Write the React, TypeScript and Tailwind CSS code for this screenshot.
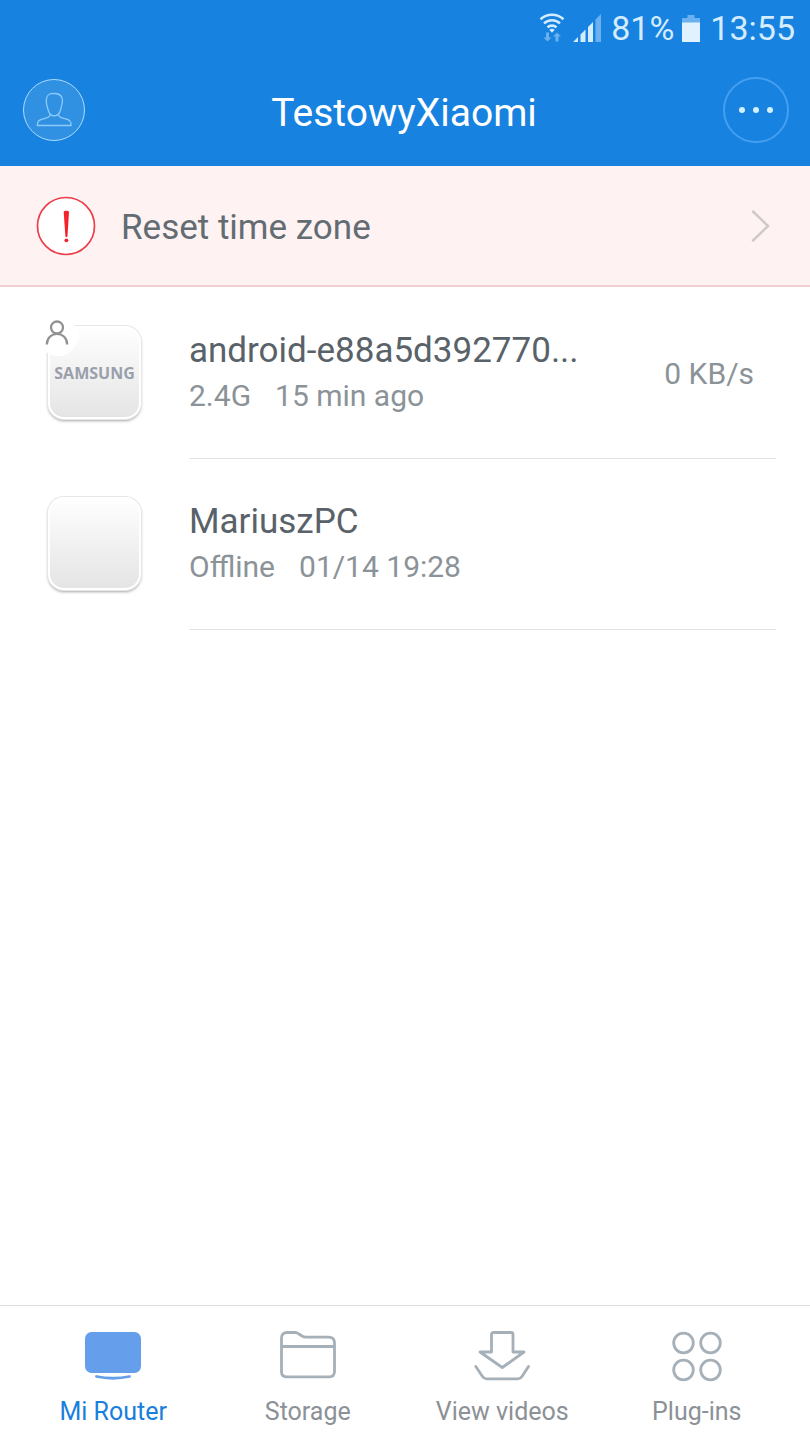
import React, { useState } from 'react';

type TabId = 'router' | 'storage' | 'videos' | 'plugins';

interface Device {
    id: string;
    name: string;
    status: string;
    lastSeen: string;
    speed?: string;
    brand?: string;
    isOwner?: boolean;
}

const devices: Device[] = [
    { id: 'android', name: 'android-e88a5d392770...', status: '2.4G', lastSeen: '15 min ago', speed: '0 KB/s', brand: 'SAMSUNG', isOwner: true },
    { id: 'pc', name: 'MariuszPC', status: 'Offline', lastSeen: '01/14 19:28' },
];

const WifiIcon = () => (
    <svg width="26" height="30" viewBox="0 0 26 30" fill="none">
        <g stroke="#d3ecff" strokeWidth="2.6">
            <path d="M1.5 6.2C8 .2 18 .2 24.5 6.2" />
            <path d="M5 10.4C9.5 6.2 16.5 6.2 21 10.4" />
            <path d="M8.5 14.4C11 12 15 12 17.5 14.4" />
        </g>
        <path d="M10.3 16.8Q13 14.8 15.7 16.8L13 19.8Z" fill="#d3ecff" />
        <path d="M7 19.5h3v5h2.5l-4 4-4-4H7zM16.5 28.5h3v-5H22l-4-4-4 4h2.500z" fill="#6bb1f0" />
    </svg>
);

const SignalIcon = () => (
    <svg width="28" height="28" viewBox="0 0 28 28">
        <path d="M0 28L5 23V28ZM7.5 20.5L12.5 15.5V28H7.5ZM15 13L20 8V28H15Z" fill="#d3ecff" />
        <path d="M22.5 5.5L28 0V28H22.5Z" fill="#6bb1f0" />
    </svg>
);

const BatteryIcon = () => (
    <svg width="18" height="27" viewBox="0 0 18 27">
        <path d="M5.5 0h7v3H18v5H0V3h5.5z" fill="#6bb1f0" />
        <path d="M0 7.5h18V27H0z" fill="#e0f1ff" />
    </svg>
);

const ProfileIcon = () => (
    <svg width="36" height="36" viewBox="0 0 36 36" fill="none" stroke="#8ccbfa" strokeWidth="1.3" strokeLinejoin="round">
        <path d="M18.5 1.5C22.5 1.5 26.5 3.5 26.5 9C26 12 25.5 15 24.5 18C23.5 22 21 23.8 18 23.8C15 23.8 13.5 22 12.5 19C11.5 16 10.5 12.5 10.2 9.5C10.2 4 13 1.800 15 1.6Z" />
        <path d="M14 22.5C14 26 11 25.5 7 26.8C3 28 1.5 28.5 1.3 33.5H35.2C35 28.5 33.5 28.2 29.5 26.8C25 25.5 22.8 25.5 22.5 22.3" />
    </svg>
);

const AlertIcon = () => (
    <svg width="60" height="60" viewBox="0 0 60 60">
        <circle cx="30" cy="30" r="28.5" fill="#fff" stroke="#ee3d48" strokeWidth="1.7" />
        <path d="M27.7 16C27.7 14.4 33 14.4 33 16L31.5 40.5Q30.4 41.5 29.4 40.5Z" fill="#f5222d" />
        <circle cx="30.4" cy="44.300" r="1.9" fill="#f5222d" />
    </svg>
);

const ChevronIcon = () => (
    <svg width="20" height="34" viewBox="0 0 20 34" fill="none" stroke="#cfc9c9" strokeWidth="2.5" strokeLinecap="round">
        <path d="M3 2.500L18 17L3 31.5" />
    </svg>
);

const OwnerIcon = () => (
    <svg width="24" height="26" viewBox="0 0 24 26" fill="none" stroke="#929292" strokeWidth="2.3">
        <circle cx="12" cy="7.5" r="6" />
        <path d="M1.8 24.5C2.2 10.3 21.8 10.3 22.2 24.5" />
    </svg>
);

const RouterIcon = () => (
    <svg width="56" height="52" viewBox="0 0 56 52">
        <rect x="0" y="2" width="56" height="41" rx="6.5" fill="#659fec" />
        <path d="M11.500 46.5Q28 50 44.5 46.5" fill="none" stroke="#659fec" strokeWidth="2.8" strokeLinecap="round" />
    </svg>
);

const FolderIcon = () => (
    <svg width="56" height="52" viewBox="0 0 56 52" fill="none" stroke="#a5b0b9" strokeWidth="2.8">
        <path d="M1.5 42V8Q1.5 2.5 7 2.5H15Q17 2.5 19 4L22 6Q24 7.2 26 7.2H48.5Q54.5 7.2 54.5 13V41.5Q54.5 46.8 49 46.8H7Q1.5 46.8 1.5 42ZM1.5 16.5H54.5" />
    </svg>
);

const DownloadIcon = () => (
    <svg width="56" height="52" viewBox="0 0 56 52" fill="none" stroke="#a5b0b9" strokeWidth="2.8" strokeLinecap="round" strokeLinejoin="round">
        <path d="M17.5 22V4.5Q17.5 2.5 19.5 2.5H37Q39 2.5 39 4.5V22H50L28.3 37.5L6 22Z" />
        <path d="M1.8 36.5L8.5 46.5Q10 48.8 12.5 48.8H44Q46.5 48.8 48 46.5L54.5 36.5" />
    </svg>
);

const PluginsIcon = () => (
    <svg width="56" height="52" viewBox="0 0 56 52" fill="none" stroke="#a5b0b9" strokeWidth="2.8">
        <circle cx="14.5" cy="13" r="9.8" />
        <circle cx="41.5" cy="13" r="9.8" />
        <circle cx="14.5" cy="40" r="9.8" />
        <circle cx="41.5" cy="40" r="9.8" />
    </svg>
);

const tabs: { id: TabId; label: string; Icon: React.FC }[] = [
    { id: 'router', label: 'Mi Router', Icon: RouterIcon },
    { id: 'storage', label: 'Storage', Icon: FolderIcon },
    { id: 'videos', label: 'View videos', Icon: DownloadIcon },
    { id: 'plugins', label: 'Plug-ins', Icon: PluginsIcon },
];

const DeviceRow: React.FC<{ device: Device }> = ({ device }) => (
    <li className="flex pl-12 pr-[34px]">
        <div className="flex w-[141px] shrink-0 items-center pb-0.5">
            <div className="relative flex h-[93px] w-[93px] items-center justify-center rounded-2xl border-2 border-white bg-gradient-to-b from-white to-[#e4e4e4] bg-origin-border shadow-[0_0_0_1px_#e6e6e6,0_2px_3px_rgba(0,0,0,0.35)]">
                {device.brand && <span className="font-['Open_Sans',sans-serif] text-base font-bold text-[#9a9fab]">{device.brand}</span>}
                {device.isOwner && (
                    <span className="absolute -left-3 -top-3 flex h-10 w-10 items-center justify-center rounded-full bg-white pb-1.5 pr-0.5">
                        <OwnerIcon />
                    </span>
                )}
            </div>
        </div>
        <div className="flex h-[171px] flex-1 items-center justify-between border-b border-[#e3e3e3] pr-[22px]">
            <div>
                <h2 className="text-[35px] leading-[46px] text-[#596269]">{device.name}</h2>
                <p className="flex gap-6 text-[30px] leading-[44px] text-[#8b9398]">
                    <span>{device.status}</span>
                    <span>{device.lastSeen}</span>
                </p>
            </div>
            {device.speed && <span className="text-[30px] text-[#8b9398]">{device.speed}</span>}
        </div>
    </li>
);

export default function App() {
    const [activeTab, setActiveTab] = useState<TabId>('router');

    return (
        <div className="flex min-h-screen flex-col bg-white font-[Roboto,sans-serif]">
            <header className="bg-[#1782df]">
                <div className="flex h-14 items-center justify-end pr-[15px] text-[34px] text-[#d3ecff]">
                    <WifiIcon />
                    <span className="ml-2"><SignalIcon /></span>
                    <span className="ml-2.5">81%</span>
                    <span className="ml-2"><BatteryIcon /></span>
                    <span className="ml-2.5">13:55</span>
                </div>
                <div className="flex h-[110px] items-center justify-between pb-0.5 pl-[23px] pr-[21px]">
                    <button type="button" aria-label="Profile" className="flex h-[62px] w-[62px] items-center justify-center rounded-full border border-[#a9dcff] bg-[#3090e2]">
                        <ProfileIcon />
                    </button>
                    <h1 className="pt-1.5 text-[39px] text-white">TestowyXiaomi</h1>
                    <button type="button" aria-label="More" className="flex h-[66px] w-[66px] items-center justify-center gap-2 rounded-full border-2 border-[#459ff0]">
                        <span className="h-1.5 w-1.5 rounded-full bg-[#d3f0ff]" />
                        <span className="h-1.5 w-1.5 rounded-full bg-[#d3f0ff]" />
                        <span className="h-1.5 w-1.5 rounded-full bg-[#d3f0ff]" />
                    </button>
                </div>
            </header>

            <button type="button" className="flex h-[121px] items-center border-b-2 border-[#efcfcf] bg-[#fef3f2] pl-9 pr-10 text-left">
                <AlertIcon />
                <span className="ml-[25px] flex-1 pt-1.5 text-[35px] text-[#636c72]">Reset time zone</span>
                <ChevronIcon />
            </button>

            <main className="flex-1 pt-px">
                <ul>
                    {devices.map(device => <DeviceRow key={device.id} device={device} />)}
                </ul>
            </main>

            <nav className="flex h-[135px] border-t border-[#dcdcdc] px-4">
                {tabs.map(({ id, label, Icon }) => (
                    <button
                        key={id}
                        type="button"
                        onClick={() => setActiveTab(id)}
                        className={`flex flex-1 flex-col items-center gap-[13px] pt-6 text-[25px] leading-[34px] ${activeTab === id ? 'text-[#1a7edb]' : 'text-[#8b9196]'}`}
                    >
                        <Icon />
                        {label}
                    </button>
                ))}
            </nav>
        </div>
    );
}
